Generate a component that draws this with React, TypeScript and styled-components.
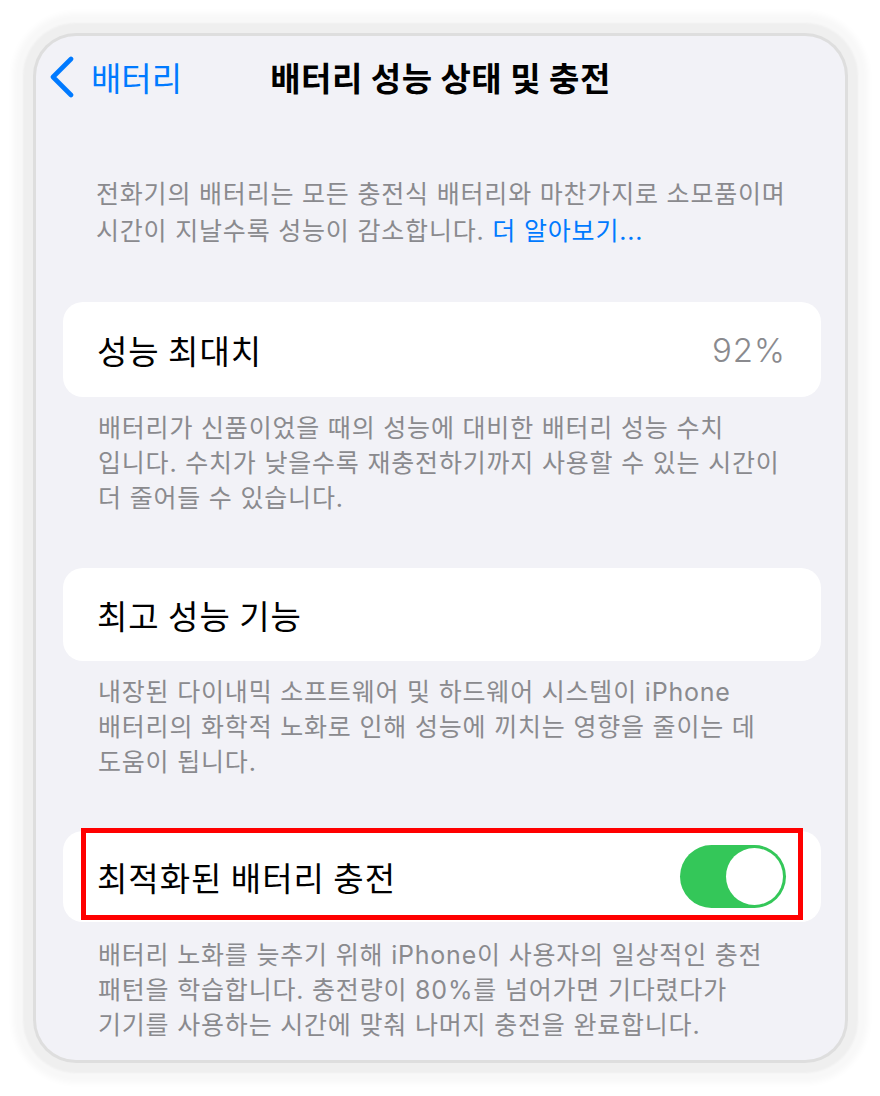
import React from "react";
import styled, { createGlobalStyle } from "styled-components";

const Global = createGlobalStyle`
  html, body { margin: 0; padding: 0; background: #ffffff; }
  body { font-family: Inter, "Noto Sans CJK KR", sans-serif; -webkit-font-smoothing: antialiased; }
  * { box-sizing: border-box; }
`;

const Page = styled.div`
  width: 880px;
  height: 1096px;
  padding: 36px 35px 36px 36px;
  background: #ffffff;
`;

const Screen = styled.div`
  width: 809px;
  height: 1024px;
  border-radius: 40px;
  background: #f2f2f7;
  box-shadow: 0 0 0 3px #dedede, 0 0 2px 13px #efefef, 0 0 6px 23px #f8f8f8;
  overflow: hidden;
  display: flex;
  flex-direction: column;
  padding: 0 24px 0 27px;
`;

const NavBar = styled.div`
  position: relative;
  height: 82px;
  display: flex;
  align-items: center;
  justify-content: center;
  margin: 0 -24px 0 -27px;
`;

const BackButton = styled.div`
  position: absolute;
  left: 13px;
  top: 0;
  bottom: 0;
  display: flex;
  align-items: center;
  gap: 16px;
  color: #007aff;
  font-size: 33px;
  font-family: "Noto Sans CJK KR", sans-serif;
`;

const Title = styled.div`
  font-size: 33px;
  font-weight: 700;
  letter-spacing: 0.5px;
  color: #000000;
  font-family: "Noto Sans CJK KR", sans-serif;
`;

const Intro = styled.p`
  margin: 58px 0 0 0;
  padding-left: 33px;
  font-size: 25px;
  line-height: 37px;
  color: #8a8a8e;
  letter-spacing: 0.8px;
`;

const Link = styled.span`
  color: #007aff;
`;

const Card = styled.div<{ $gap?: number; $h?: number }>`
  position: relative;
  margin-top: ${(p) => p.$gap ?? 52}px;
  height: ${(p) => p.$h ?? 94}px;
  background: #ffffff;
  border-radius: 20px;
  display: flex;
  align-items: center;
  justify-content: space-between;
  padding: 0 35px 0 34px;
`;

const Label = styled.span`
  font-size: 33px;
  color: #000000;
  font-family: "Noto Sans CJK KR", sans-serif;
  letter-spacing: 1px;
`;

const Value = styled.span`
  font-size: 33px;
  color: #8a8a8e;
  font-weight: 300;
  letter-spacing: 1px;
`;

const Footer = styled.p<{ $gap?: number }>`
  margin: ${(p) => p.$gap ?? 14}px 0 0 0;
  padding-left: 35px;
  font-size: 25px;
  line-height: 35px;
  color: #8a8a8e;
  letter-spacing: 0.8px;
`;

const Toggle = styled.div<{ $on: boolean }>`
  width: 106px;
  height: 63px;
  border-radius: 32px;
  background: ${(p) => (p.$on ? "#34c759" : "#e9e9ea")};
  padding: 3px;
  display: flex;
  justify-content: ${(p) => (p.$on ? "flex-end" : "flex-start")};
`;

const Knob = styled.div`
  width: 57px;
  height: 57px;
  border-radius: 50%;
  background: #ffffff;
`;

const Highlight = styled.div`
  position: absolute;
  left: 18px;
  right: 18px;
  top: -3px;
  bottom: 2px;
  border: 5px solid #ff0000;
  pointer-events: none;
`;

const Chevron = () => (
  <svg width="26" height="42" viewBox="0 0 26 42" fill="none">
    <path d="M22 3 L4 21 L22 39" stroke="#007aff" strokeWidth="4.6" strokeLinecap="round" strokeLinejoin="round" />
  </svg>
);

export default function App() {
  return (
    <>
      <Global />
      <Page>
        <Screen>
          <NavBar>
            <BackButton>
              <Chevron />
              <span>배터리</span>
            </BackButton>
            <Title>배터리 성능 상태 및 충전</Title>
          </NavBar>
          <Intro>
            전화기의 배터리는 모든 충전식 배터리와 마찬가지로 소모품이며
            <br />
            시간이 지날수록 성능이 감소합니다. <Link>더 알아보기...</Link>
          </Intro>

          <Card $gap={52} $h={95}>
            <Label>성능 최대치</Label>
            <Value>92%</Value>
          </Card>
          <Footer>
            배터리가 신품이었을 때의 성능에 대비한 배터리 성능 수치
            <br />
            입니다. 수치가 낮을수록 재충전하기까지 사용할 수 있는 시간이
            <br />더 줄어들 수 있습니다.
          </Footer>

          <Card $gap={52} $h={93}>
            <Label>최고 성능 기능</Label>
          </Card>
          <Footer>
            내장된 다이내믹 소프트웨어 및 하드웨어 시스템이 iPhone
            <br />
            배터리의 화학적 노화로 인해 성능에 끼치는 영향을 줄이는 데
            <br />
            도움이 됩니다.
          </Footer>

          <Card $gap={51} $h={91}>
            <Label>최적화된 배터리 충전</Label>
            <Toggle $on={true}>
              <Knob />
            </Toggle>
            <Highlight />
          </Card>
          <Footer $gap={16}>
            배터리 노화를 늦추기 위해 iPhone이 사용자의 일상적인 충전
            <br />
            패턴을 학습합니다. 충전량이 80%를 넘어가면 기다렸다가
            <br />
            기기를 사용하는 시간에 맞춰 나머지 충전을 완료합니다.
          </Footer>
        </Screen>
      </Page>
    </>
  );
}
